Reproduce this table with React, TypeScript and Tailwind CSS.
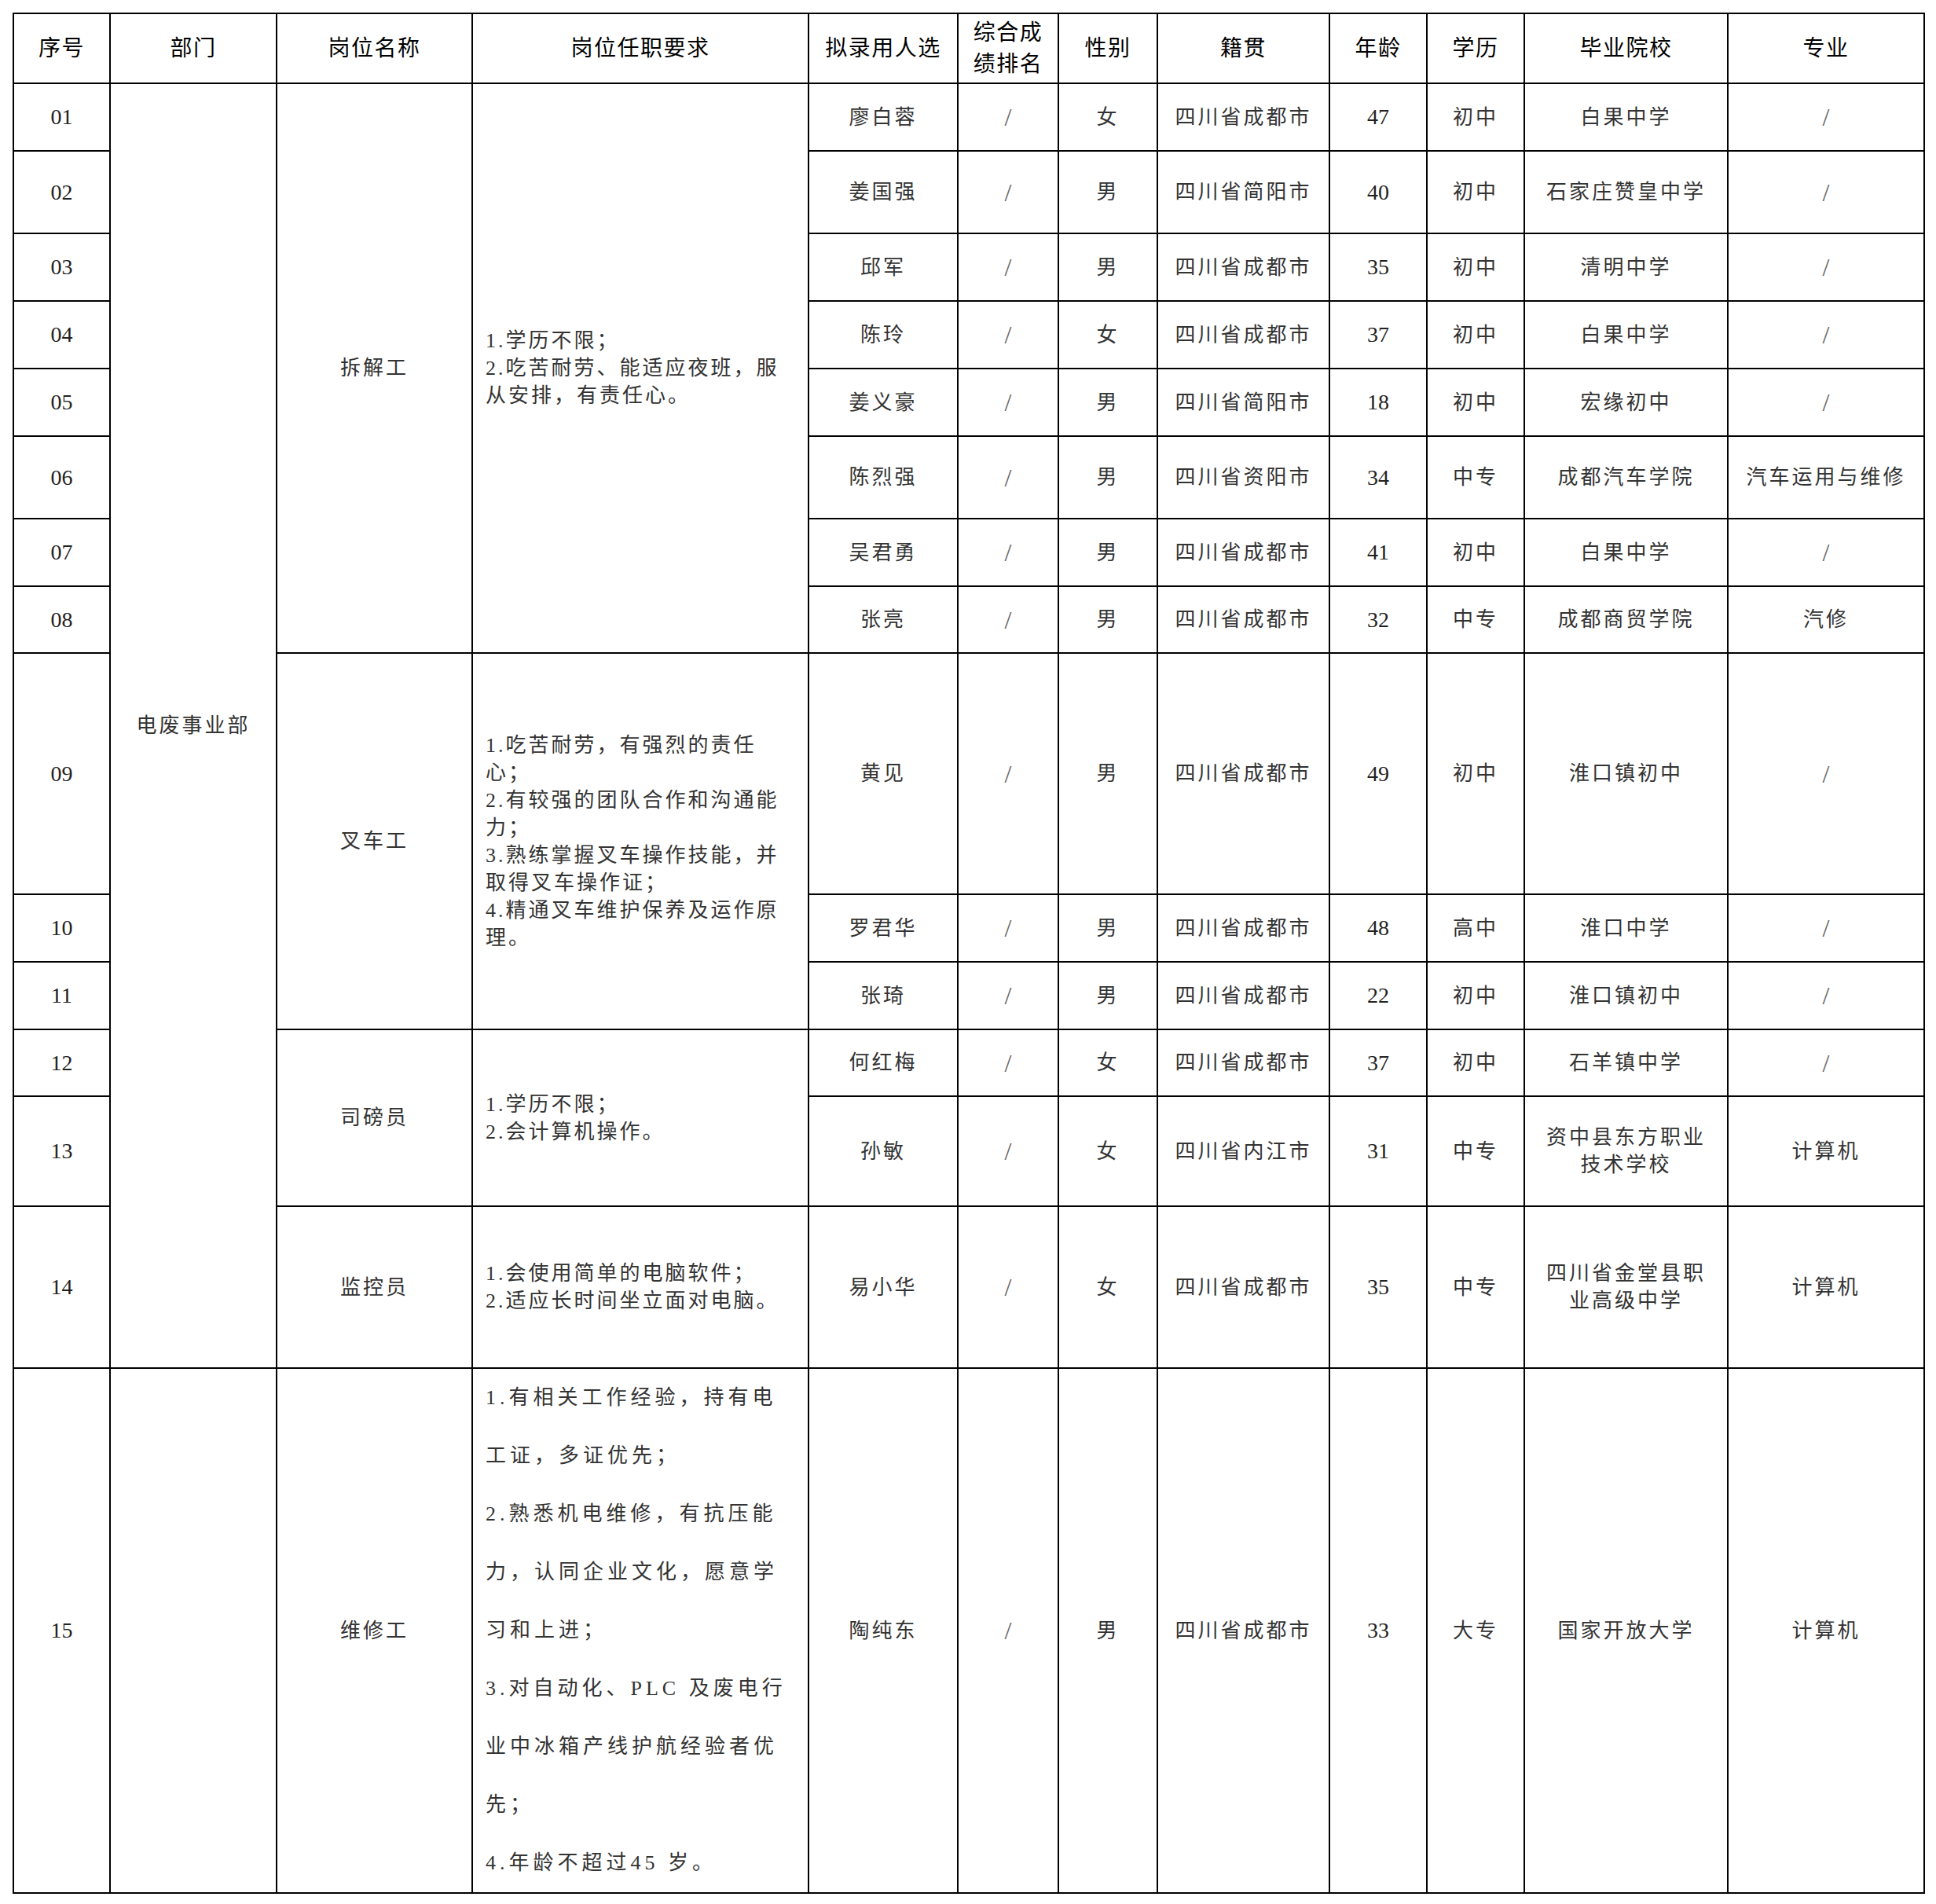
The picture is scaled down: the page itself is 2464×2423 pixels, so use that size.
import React from "react";

type Row = {
  no: string;
  name: string;
  sex: string;
  origin: string;
  age: string;
  edu: string;
  school: string[];
  major: string;
};

const rows: Row[] = [
  { no: "01", name: "廖白蓉", sex: "女", origin: "四川省成都市", age: "47", edu: "初中", school: ["白果中学"], major: "/" },
  { no: "02", name: "姜国强", sex: "男", origin: "四川省简阳市", age: "40", edu: "初中", school: ["石家庄赞皇中学"], major: "/" },
  { no: "03", name: "邱军", sex: "男", origin: "四川省成都市", age: "35", edu: "初中", school: ["清明中学"], major: "/" },
  { no: "04", name: "陈玲", sex: "女", origin: "四川省成都市", age: "37", edu: "初中", school: ["白果中学"], major: "/" },
  { no: "05", name: "姜义豪", sex: "男", origin: "四川省简阳市", age: "18", edu: "初中", school: ["宏缘初中"], major: "/" },
  { no: "06", name: "陈烈强", sex: "男", origin: "四川省资阳市", age: "34", edu: "中专", school: ["成都汽车学院"], major: "汽车运用与维修" },
  { no: "07", name: "吴君勇", sex: "男", origin: "四川省成都市", age: "41", edu: "初中", school: ["白果中学"], major: "/" },
  { no: "08", name: "张亮", sex: "男", origin: "四川省成都市", age: "32", edu: "中专", school: ["成都商贸学院"], major: "汽修" },
  { no: "09", name: "黄见", sex: "男", origin: "四川省成都市", age: "49", edu: "初中", school: ["淮口镇初中"], major: "/" },
  { no: "10", name: "罗君华", sex: "男", origin: "四川省成都市", age: "48", edu: "高中", school: ["淮口中学"], major: "/" },
  { no: "11", name: "张琦", sex: "男", origin: "四川省成都市", age: "22", edu: "初中", school: ["淮口镇初中"], major: "/" },
  { no: "12", name: "何红梅", sex: "女", origin: "四川省成都市", age: "37", edu: "初中", school: ["石羊镇中学"], major: "/" },
  { no: "13", name: "孙敏", sex: "女", origin: "四川省内江市", age: "31", edu: "中专", school: ["资中县东方职业", "技术学校"], major: "计算机" },
  { no: "14", name: "易小华", sex: "女", origin: "四川省成都市", age: "35", edu: "中专", school: ["四川省金堂县职", "业高级中学"], major: "计算机" },
  { no: "15", name: "陶纯东", sex: "男", origin: "四川省成都市", age: "33", edu: "大专", school: ["国家开放大学"], major: "计算机" },
];

type Job = { title: string; span: string; lines: string[]; wide?: boolean };

const jobs: Record<number, Job> = {
  0: {
    title: "拆解工",
    span: "row-span-8",
    lines: ["1.学历不限；", "2.吃苦耐劳、能适应夜班，服", "从安排，有责任心。"],
  },
  8: {
    title: "叉车工",
    span: "row-span-3",
    lines: [
      "1.吃苦耐劳，有强烈的责任",
      "心；",
      "2.有较强的团队合作和沟通能",
      "力；",
      "3.熟练掌握叉车操作技能，并",
      "取得叉车操作证；",
      "4.精通叉车维护保养及运作原",
      "理。",
    ],
  },
  11: {
    title: "司磅员",
    span: "row-span-2",
    lines: ["1.学历不限；", "2.会计算机操作。"],
  },
  13: {
    title: "监控员",
    span: "row-span-1",
    lines: ["1.会使用简单的电脑软件；", "2.适应长时间坐立面对电脑。"],
  },
  14: {
    title: "维修工",
    span: "row-span-1",
    wide: true,
    lines: [
      "1.有相关工作经验，持有电",
      "工证，多证优先；",
      "2.熟悉机电维修，有抗压能",
      "力，认同企业文化，愿意学",
      "习和上进；",
      "3.对自动化、PLC 及废电行",
      "业中冰箱产线护航经验者优",
      "先；",
      "4.年龄不超过45 岁。",
    ],
  },
};

const cell = "border-r-2 border-b-2 border-black flex items-center justify-center text-center";
const body = "text-[26px] tracking-[3px] text-[#333] leading-[35px]";
const num = "text-[28px] text-[#222]";
const slash = "text-[32px] text-[#666] font-light";

function HeaderCell({ children }: { children: React.ReactNode }) {
  return (
    <div className={`${cell} text-[28px] tracking-[1.5px] leading-[40px] text-black font-normal`}>
      {children}
    </div>
  );
}

export default function App() {
  const cells: React.ReactNode[] = [];
  rows.forEach((r, i) => {
    cells.push(
      <div key={`no${i}`} className={`${cell} ${num}`}>
        {r.no}
      </div>
    );
    if (i === 0) {
      cells.push(
        <div key="dept" className={`${cell} row-span-14 ${body}`}>
          电废事业部
        </div>
      );
    }
    if (i === 14) {
      cells.push(<div key="dept2" className={cell} />);
    }
    const job = jobs[i];
    if (job) {
      cells.push(
        <div key={`jt${i}`} className={`${cell} ${job.span} ${body}`}>
          {job.title}
        </div>
      );
      cells.push(
        <div
          key={`jr${i}`}
          className={`border-r-2 border-b-2 border-black flex flex-col justify-center items-start pl-[16px] ${job.span} ${
            job.wide
              ? "text-[26px] tracking-[5px] leading-[74px] text-[#333]"
              : "text-[26px] tracking-[3px] leading-[35px] text-[#333]"
          }`}
        >
          {job.lines.map((l, k) => (
            <div key={k} className="whitespace-nowrap">
              {l}
            </div>
          ))}
        </div>
      );
    }
    cells.push(
      <div key={`nm${i}`} className={`${cell} ${body}`}>
        {r.name}
      </div>
    );
    cells.push(
      <div key={`rk${i}`} className={`${cell} ${slash}`}>
        /
      </div>
    );
    cells.push(
      <div key={`sx${i}`} className={`${cell} ${body}`}>
        {r.sex}
      </div>
    );
    cells.push(
      <div key={`og${i}`} className={`${cell} ${body}`}>
        {r.origin}
      </div>
    );
    cells.push(
      <div key={`ag${i}`} className={`${cell} ${num}`}>
        {r.age}
      </div>
    );
    cells.push(
      <div key={`ed${i}`} className={`${cell} ${body}`}>
        {r.edu}
      </div>
    );
    cells.push(
      <div key={`sc${i}`} className={`${cell} ${body} flex-col`}>
        {r.school.map((s, k) => (
          <div key={k} className="whitespace-nowrap">
            {s}
          </div>
        ))}
      </div>
    );
    cells.push(
      <div key={`mj${i}`} className={`${cell} ${r.major === "/" ? slash : body}`}>
        {r.major}
      </div>
    );
  });

  return (
    <div className="min-h-[2423px] w-[2464px] bg-white pt-[16px] pl-[16px] font-['Liberation_Serif','Noto_Sans_CJK_SC',serif]">
      <div className="grid w-[2434px] border-l-2 border-t-2 border-black grid-cols-[123px_212px_249px_428px_190px_128px_126px_219px_124px_124px_259px_250px] grid-rows-[89px_86px_105px_86px_86px_86px_105px_86px_85px_307px_86px_86px_85px_140px_206px_668px]">
        <HeaderCell>序号</HeaderCell>
        <HeaderCell>部门</HeaderCell>
        <HeaderCell>岗位名称</HeaderCell>
        <HeaderCell>岗位任职要求</HeaderCell>
        <HeaderCell>拟录用人选</HeaderCell>
        <HeaderCell>
          <span>
            综合成
            <br />
            绩排名
          </span>
        </HeaderCell>
        <HeaderCell>性别</HeaderCell>
        <HeaderCell>籍贯</HeaderCell>
        <HeaderCell>年龄</HeaderCell>
        <HeaderCell>学历</HeaderCell>
        <HeaderCell>毕业院校</HeaderCell>
        <HeaderCell>专业</HeaderCell>
        {cells}
      </div>
    </div>
  );
}
